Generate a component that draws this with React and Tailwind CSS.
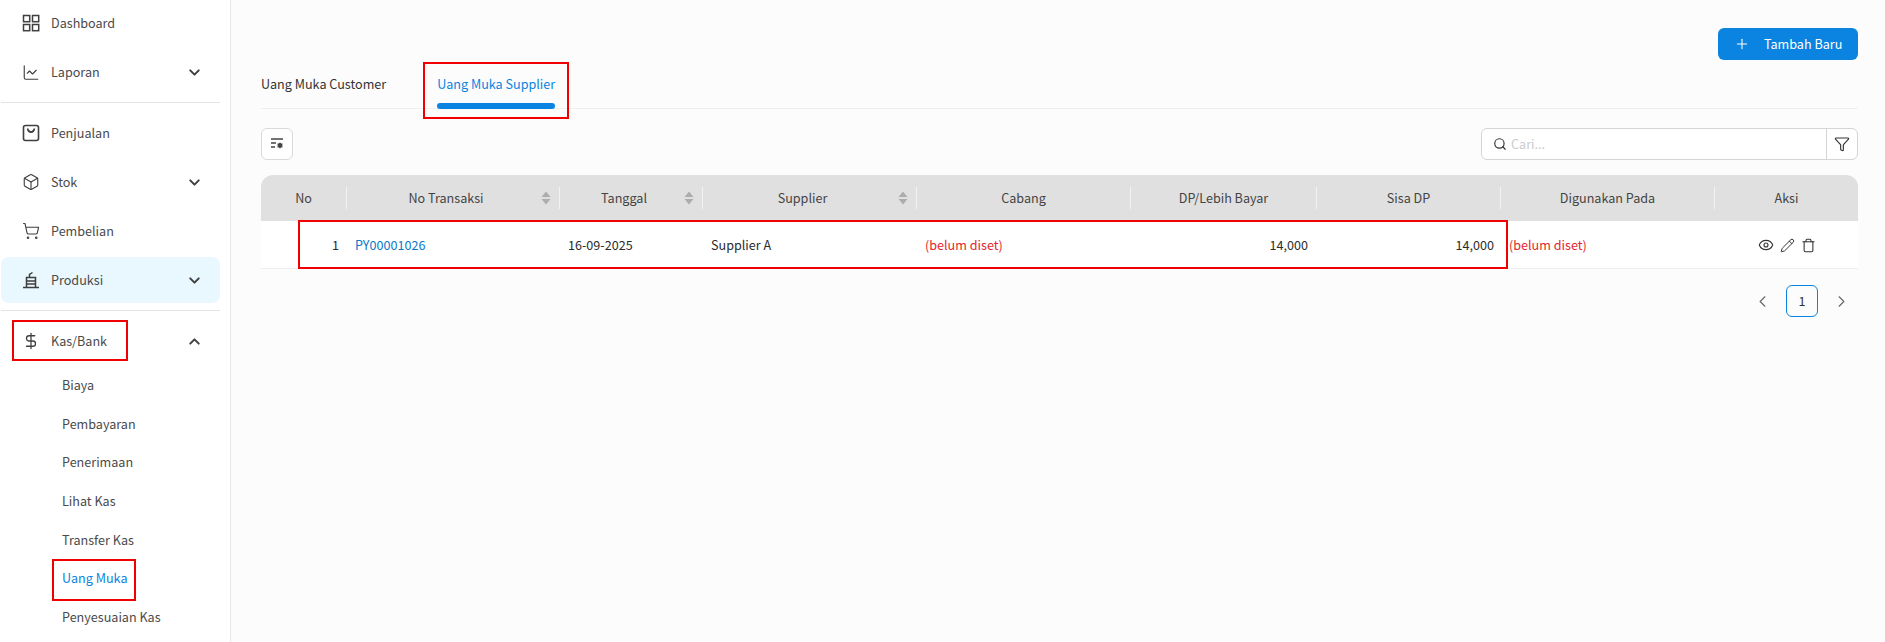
import { Box, ChartLine, ChevronDown, ChevronLeft, ChevronRight, ChevronUp, DollarSign, Eye, Funnel, Pencil, Plus, Search, ShoppingCart, Trash } from "lucide-react";

const font = "font-['Noto_Sans_CJK_SC','Noto_Sans',sans-serif]";

function DashboardIcon() {
  return (
    <svg width="18" height="18" viewBox="0 0 18 18" fill="none" stroke="currentColor" strokeWidth="1.5">
      <rect x="1.5" y="1.5" width="6.2" height="6.2" />
      <rect x="10.5" y="1.5" width="6.2" height="6.2" />
      <rect x="1.5" y="10.5" width="6.2" height="6.2" />
      <rect x="10.5" y="10.5" width="6.2" height="6.2" />
    </svg>
  );
}

function BagIcon() {
  return (
    <svg width="18" height="18" viewBox="0 0 18 18" fill="none" stroke="currentColor" strokeWidth="1.6">
      <rect x="1.5" y="1.5" width="15" height="15" rx="2" />
      <path d="M5.5 4.5c.5 2.4 1.8 3.6 3.5 3.6s3-1.2 3.5-3.6" />
    </svg>
  );
}

function ProduksiIcon() {
  return (
    <svg width="18" height="18" viewBox="0 0 18 18" fill="none" stroke="currentColor" strokeWidth="1.5">
      <path d="M1 16.5h16M4.5 16V6.5h9V16M4.5 10h9M4.5 13h9M7.5 6.5V3.5l3-2" />
    </svg>
  );
}

function ColumnIcon() {
  return (
    <svg width="14" height="14" viewBox="0 0 14 14" fill="none" stroke="#444" strokeWidth="1.3">
      <path d="M1 2h12M1 6h5M1 10h4" />
      <circle cx="10" cy="8.5" r="1.8" fill="#444" />
      <path d="M10 5.6v1M10 10.4v1M7.4 7l.8.5M11.8 9.5l.8.5M7.4 10l.8-.5M11.8 7.5l.8-.5" strokeWidth="1" />
    </svg>
  );
}

function SortIcon() {
  return (
    <svg width="10" height="14" viewBox="0 0 10 14" fill="#adadad">
      <path d="M5 0.5 9.5 6H.5zM.5 8h9L5 13.5z" />
    </svg>
  );
}

function NavRow({ icon, label, chevron, active }) {
  return (
    <div className={`flex h-[46px] mx-px items-center rounded-lg pl-[21px] pr-[17px] text-[12.6px] text-[#4a4a4a] ${active ? "bg-[#e9f7fe]" : ""}`}>
      <span className="flex w-[18px] justify-center text-[#3f3f3f]">{icon}</span>
      <span className="ml-[11px]">{label}</span>
      {chevron === "down" && <ChevronDown size={17} strokeWidth={2.8} className="ml-auto text-[#3f3f3f]" />}
      {chevron === "up" && <ChevronUp size={17} strokeWidth={2.8} className="ml-auto text-[#3f3f3f]" />}
    </div>
  );
}

function Sidebar() {
  const subs = ["Biaya", "Pembayaran", "Penerimaan", "Lihat Kas", "Transfer Kas", "Uang Muka", "Penyesuaian Kas"];
  return (
    <aside className="h-[642px] w-[231px] shrink-0 overflow-hidden border-r border-[#e6eaee] bg-white">
      <div className="w-[221px]">
        <div className="flex flex-col gap-[3px]">
          <NavRow icon={<DashboardIcon />} label="Dashboard" />
          <NavRow icon={<ChartLine size={19} strokeWidth={1.5} />} label="Laporan" chevron="down" />
        </div>
        <div className="mx-px mt-[7px] border-t border-[#e4e4e4]" />
        <div className="mt-[7px] flex flex-col gap-[3px]">
          <NavRow icon={<BagIcon />} label="Penjualan" />
          <NavRow icon={<Box size={20} strokeWidth={1.5} />} label="Stok" chevron="down" />
          <NavRow icon={<ShoppingCart size={20} strokeWidth={1.5} />} label="Pembelian" />
          <NavRow icon={<ProduksiIcon />} label="Produksi" chevron="down" active />
        </div>
        <div className="mx-px mt-[7px] border-t border-[#e4e4e4]" />
        <div className="mt-[7px]">
          <NavRow icon={<DollarSign size={24} strokeWidth={1.7} />} label="Kas/Bank" chevron="up" />
        </div>
        <div className="mt-[2px] flex flex-col pl-[62px]">
          {subs.map((s) => (
            <div key={s} className={`flex h-[38.7px] items-center text-[12.6px] ${s === "Uang Muka" ? "text-[#0a84e0]" : "text-[#4a4a4a]"}`}>
              {s}
            </div>
          ))}
        </div>
      </div>
    </aside>
  );
}

function Th({ children, sort, last }) {
  return (
    <div className={`relative flex h-[22px] items-center justify-center px-2 text-[12.6px] text-[#444] ${last ? "" : "border-r border-[#f2f2f2]"}`}>
      <span className={sort ? "mr-[14px]" : ""}>{children}</span>
      {sort && <span className="absolute right-[8px] flex"><SortIcon /></span>}
    </div>
  );
}

const gridCols = "grid grid-cols-[86px_213px_143px_214px_214px_186px_184px_214px_143px]";

export default function App() {
  return (
    <div className={`relative flex h-[642px] w-[1885px] overflow-hidden bg-[#fcfcfc] ${font}`}>
      <Sidebar />
      <main className="flex-1 pl-[30px] pr-[27px] pt-[28px]">
        <div className="flex justify-end">
          <button className="flex h-[32px] w-[140px] items-center rounded-md bg-[#0a84e0] pl-[16px] text-[12.6px] text-white">
            <Plus size={16} strokeWidth={1.6} />
            <span className="ml-[14px]">Tambah Baru</span>
          </button>
        </div>

        <div className="mt-[2px] flex h-[47px] items-start border-b border-[#efefef] text-[12.6px]">
          <span className="mt-[13px] text-[#333]">Uang Muka Customer</span>
          <div className="relative ml-[51px] h-[47px] text-[#0a84e0]">
            <span className="mt-[13px] block">Uang Muka Supplier</span>
            <div className="absolute bottom-0 left-0 right-0 h-[6px] rounded-full bg-[#0a84e0]" />
          </div>
        </div>

        <div className="mt-[19px] flex items-center justify-between">
          <button className="flex h-[32px] w-[32px] items-center justify-center rounded-md border border-[#d9d9d9] bg-white">
            <ColumnIcon />
          </button>
          <div className="flex h-[32px] w-[377px] overflow-hidden rounded-md border border-[#d4d4d4] bg-white">
            <div className="flex flex-1 items-center pl-[11px] text-[12.6px] text-[#c8ccd0]">
              <Search size={14} strokeWidth={2} className="text-[#333]" />
              <span className="ml-[4px]">Cari...</span>
            </div>
            <div className="flex w-[31px] items-center justify-center border-l border-[#d4d4d4]">
              <Funnel size={16} strokeWidth={1.7} className="text-[#333]" />
            </div>
          </div>
        </div>

        <div className={`mt-[15px] ${gridCols} h-[46px] items-center rounded-t-xl bg-[#e0e0e0]`}>
          <Th>No</Th>
          <Th sort>No Transaksi</Th>
          <Th sort>Tanggal</Th>
          <Th sort>Supplier</Th>
          <Th>Cabang</Th>
          <Th>DP/Lebih Bayar</Th>
          <Th>Sisa DP</Th>
          <Th>Digunakan Pada</Th>
          <Th last>Aksi</Th>
        </div>
        <div className={`${gridCols} h-[48px] items-center border-b border-[#efefef] bg-white pt-[1px] text-[12.6px] text-[#2b2b2b]`}>
          <div className="pr-[8px] text-right">1</div>
          <div className="pl-[8px] text-[#0a78c8]">PY00001026</div>
          <div className="pl-[8px]">16-09-2025</div>
          <div className="pl-[8px]">Supplier A</div>
          <div className="pl-[8px] text-[#e5262b]">(belum diset)</div>
          <div className="pr-[9px] text-right">14,000</div>
          <div className="pr-[7px] text-right">14,000</div>
          <div className="pl-[8px] text-[#e5262b]">(belum diset)</div>
          <div className="flex items-center justify-center gap-[6px] text-[#333]">
            <Eye size={16} strokeWidth={1.7} />
            <Pencil size={15} strokeWidth={1.6} />
            <Trash size={15} strokeWidth={1.7} />
          </div>
        </div>

        <div className="mt-[16px] flex items-center justify-end pr-[7px]">
          <ChevronLeft size={19} strokeWidth={1.4} className="text-[#666]" />
          <div className="ml-[14px] mr-[14px] flex h-[32px] w-[32px] items-center justify-center rounded-md border border-[#0a84e0] text-[12.6px] text-[#333]">1</div>
          <ChevronRight size={19} strokeWidth={1.4} className="text-[#666]" />
        </div>
      </main>

      {/* kotak anotasi merah di atas screenshot */}
      <div className="pointer-events-none absolute left-[423px] top-[62px] h-[57px] w-[146px] border-2 border-[#f00000]" />
      <div className="pointer-events-none absolute left-[298px] top-[220px] h-[49px] w-[1210px] border-2 border-[#f00000]" />
      <div className="pointer-events-none absolute left-[12px] top-[320px] h-[41px] w-[116px] border-2 border-[#f00000]" />
      <div className="pointer-events-none absolute left-[52px] top-[559px] h-[42px] w-[84px] border-2 border-[#f00000]" />
    </div>
  );
}
